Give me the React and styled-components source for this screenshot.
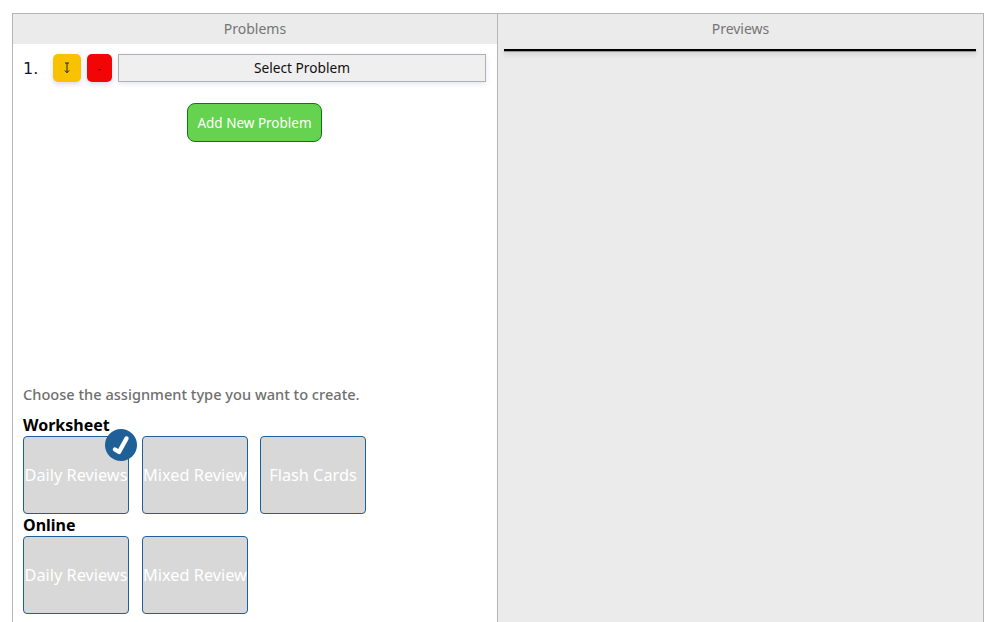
import React from "react";
import styled, { createGlobalStyle } from "styled-components";

const GlobalStyle = createGlobalStyle`
  html, body {
    margin: 0;
    padding: 0;
    height: 100%;
    overflow: hidden;
    background: #fff;
  }
  body {
    font-family: "Noto Sans", "Open Sans", sans-serif;
  }
`;

const Page = styled.div`
  display: flex;
  width: 970px;
  height: 609px;
  margin: 13px 0 0 12px;
  border: 1px solid #b5b5b5;
  border-bottom: none;
  overflow: hidden;
`;

const LeftPanel = styled.section`
  width: 484px;
  flex: none;
  display: flex;
  flex-direction: column;
  border-right: 1px solid #b5b5b5;
  background: #fff;
`;

const RightPanel = styled.section`
  flex: 1;
  display: flex;
  flex-direction: column;
  background: #ebebeb;
`;

const PanelTitle = styled.div`
  height: 29px;
  padding-bottom: 1px;
  flex: none;
  display: flex;
  align-items: center;
  justify-content: center;
  background: #ebebeb;
  color: #757575;
  font-size: 14px;
`;

const PreviewRule = styled.div`
  height: 2px;
  margin: 5px 7px 0 6px;
  background: #000;
  box-shadow: 0 1px 1px rgba(0, 0, 0, 0.35), 0 3px 5px rgba(0, 0, 0, 0.2);
`;

const ProblemRow = styled.div`
  display: flex;
  align-items: center;
  height: 28px;
  margin: 10px 11px 0 10px;
`;

const ProblemNumber = styled.span`
  width: 30px;
  flex: none;
  font-family: "DejaVu Sans", sans-serif;
  font-size: 16px;
  color: #17123a;
`;

const IconButton = styled.button`
  width: ${(p) => p.$width}px;
  height: 28px;
  flex: none;
  margin-right: 6px;
  padding: 0;
  border: none;
  border-radius: 5px;
  background: ${(p) => p.$color};
  color: #111;
  font-size: 13px;
  display: flex;
  align-items: center;
  justify-content: center;
  box-shadow: 0 2px 5px rgba(70, 80, 160, 0.22);
`;

const SelectButton = styled.button`
  flex: 1;
  height: 28px;
  padding: 0 0 1px;
  border: 1px solid #b0b0b4;
  background: #efefef;
  color: #111;
  font-family: inherit;
  font-size: 13.7px;
  box-shadow: 0 2px 5px rgba(70, 80, 160, 0.14);
`;

const AddButton = styled.button`
  width: 135px;
  height: 39px;
  align-self: center;
  margin: 21px 1px 0 0;
  padding: 0;
  border: 1px solid #0b7a0b;
  border-radius: 8px;
  background: #65d34f;
  color: #fff;
  font-family: inherit;
  font-size: 13.5px;
`;

const AssignmentSection = styled.div`
  margin: 243px 0 0 10px;
`;

const Prompt = styled.p`
  margin: -1px 0 12px;
  height: 20px;
  line-height: 20px;
  color: #6f6f6f;
  font-size: 14.6px;
  font-weight: 500;
`;

const GroupLabel = styled.h3`
  margin: 0;
  height: 20px;
  line-height: 18px;
  color: #000;
  font-size: 16px;
  font-weight: 700;
`;

const CardRow = styled.div`
  display: flex;
  height: 80px;
`;

const Card = styled.button`
  position: relative;
  width: 106px;
  height: 78px;
  flex: none;
  margin-right: ${(p) => p.$gap}px;
  padding: 0;
  border: 1px solid #1f6099;
  border-radius: 4px;
  background: #d8d8d8;
  color: #fff;
  font-family: inherit;
  font-size: 16.3px;
  white-space: nowrap;
`;

const CheckBadge = styled.svg`
  position: absolute;
  top: -8px;
  right: -9px;
`;

const ArrowIcon = () => (
  <svg width="10" height="12" viewBox="0 0 10 12" fill="none" stroke="#222" strokeWidth="1">
    <path d="M3 1h4M5 1v9.5M2.8 8.4L5 10.8l2.2-2.4" />
  </svg>
);

const worksheetCards = [
  { label: "Daily Reviews", gap: 13, selected: true },
  { label: "Mixed Review", gap: 12 },
  { label: "Flash Cards", gap: 0 },
];

const onlineCards = [
  { label: "Daily Reviews", gap: 13 },
  { label: "Mixed Review", gap: 12 },
];

const CardGroup = ({ title, cards }) => (
  <>
    <GroupLabel>{title}</GroupLabel>
    <CardRow>
      {cards.map((card) => (
        <Card key={card.label} $gap={card.gap}>
          {card.label}
          {card.selected && (
            <CheckBadge width="32" height="32" viewBox="0 0 32 32">
              <circle cx="16" cy="16" r="16" fill="#1f6099" />
              <path
                d="M10 20.5L14 23L21.5 9.5"
                fill="none"
                stroke="#fff"
                strokeWidth="4.4"
                strokeLinecap="round"
                strokeLinejoin="round"
              />
            </CheckBadge>
          )}
        </Card>
      ))}
    </CardRow>
  </>
);

const App = () => {
  return (
    <>
      <GlobalStyle />
      <Page>
        <LeftPanel>
          <PanelTitle>Problems</PanelTitle>
          <ProblemRow>
            <ProblemNumber>1.</ProblemNumber>
            <IconButton $width={28} $color="#f9c200">
              <ArrowIcon />
            </IconButton>
            <IconButton $width={25} $color="#f20505">-</IconButton>
            <SelectButton>Select Problem</SelectButton>
          </ProblemRow>
          <AddButton>Add New Problem</AddButton>
          <AssignmentSection>
            <Prompt>Choose the assignment type you want to create.</Prompt>
            <CardGroup title="Worksheet" cards={worksheetCards} />
            <CardGroup title="Online" cards={onlineCards} />
          </AssignmentSection>
        </LeftPanel>
        <RightPanel>
          <PanelTitle>Previews</PanelTitle>
          <PreviewRule />
        </RightPanel>
      </Page>
    </>
  );
};

export default App;
